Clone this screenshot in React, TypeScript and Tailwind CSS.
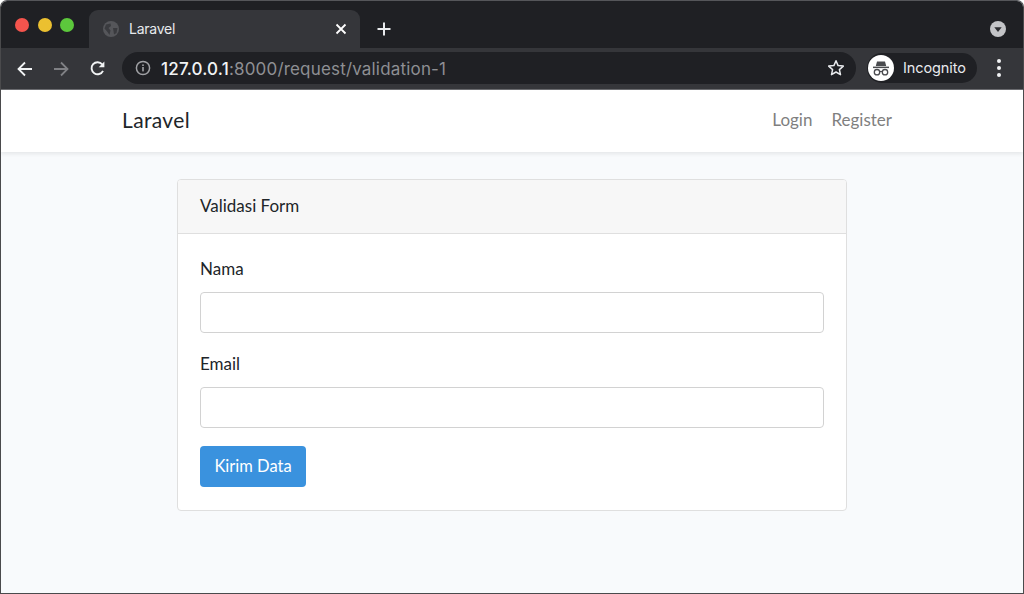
import React from "react";

function Globe() {
  return (
    <svg width="16" height="16" viewBox="0 0 16 16">
      <circle cx="8" cy="8" r="8" fill="#55565a" />
      <path d="M3 3.5 L7.5 2.5 L8 5 L5.5 7 L7.5 9.5 L6.5 14 L4.5 11 L1.5 7.5Z M10 7 L14.5 7 L13.5 12 L11 13.5 L10.5 10Z" fill="#3a3b3f" />
    </svg>
  );
}

function Incognito() {
  return (
    <svg width="26" height="26" viewBox="0 0 26 26">
      <circle cx="13" cy="13" r="13" fill="#ffffff" />
      <path d="M9 6.5 L17 6.5 L18.2 11 L7.8 11Z" fill="#4a4b4f" />
      <rect x="5" y="11.6" width="16" height="1.5" fill="#4a4b4f" />
      <circle cx="9" cy="17.2" r="2.7" fill="none" stroke="#4a4b4f" strokeWidth="1.3" />
      <circle cx="17" cy="17.2" r="2.7" fill="none" stroke="#4a4b4f" strokeWidth="1.3" />
      <path d="M11.7 16.8 Q13 16 14.3 16.8" fill="none" stroke="#4a4b4f" strokeWidth="1.2" />
    </svg>
  );
}

export default function App() {
  return (
    <div className="w-[1024px] h-[594px] bg-white overflow-hidden font-['Lato','Noto_Sans',sans-serif]">
      <div className="w-full h-full flex flex-col overflow-hidden rounded-t-[7px] border border-[#4a4a4c] border-t-[#55565a]">
        {/* tab strip */}
        <div className="h-[47px] shrink-0 bg-[#1f2024] flex items-end">
          <div className="w-[88px] h-[47px] flex items-start gap-[8.5px] pl-[14px] pt-[17px]">
            <span className="w-[14px] h-[14px] rounded-full bg-[#f5544d]" />
            <span className="w-[14px] h-[14px] rounded-full bg-[#ebc030]" />
            <span className="w-[14px] h-[14px] rounded-full bg-[#5cc83c]" />
          </div>
          <div className="w-[271px] h-[38px] bg-[#35363a] rounded-t-[9px] flex items-center pl-[14px] pr-[13px]">
            <Globe />
            <span className="ml-[10px] -mt-[2px] text-[14px] text-[#e8eaed] font-['Inter',sans-serif] tracking-[-0.25px]">Laravel</span>
            <svg className="ml-auto" width="12" height="12" viewBox="0 0 12 12">
              <path d="M1.5 1.5 L10.5 10.5 M10.5 1.5 L1.5 10.5" stroke="#ffffff" strokeWidth="1.8" />
            </svg>
          </div>
          <div className="ml-[17px] h-[38px] flex items-center">
            <svg width="14" height="14" viewBox="0 0 14 14">
              <path d="M7 0.5 V13.5 M0.5 7 H13.5" stroke="#e8eaed" strokeWidth="2" />
            </svg>
          </div>
          <div className="ml-auto mr-[17px] h-[38px] flex items-center">
            <svg width="16" height="16" viewBox="0 0 16 16">
              <circle cx="8" cy="8" r="8" fill="#c3c4c7" />
              <path d="M4.3 6.2 H11.7 L8 11Z" fill="#2a2b2f" />
            </svg>
          </div>
        </div>
        {/* toolbar */}
        <div className="h-[42px] shrink-0 bg-[#35363a] flex items-center border-b border-[#6b6c70]">
          <div className="w-[121px] flex items-center pl-[16px]">
            <svg width="16" height="16" viewBox="0 0 16 16">
              <path d="M15 8 H1.5 M8 1.5 L1.5 8 L8 14.5" fill="none" stroke="#f1f3f4" strokeWidth="1.8" />
            </svg>
            <svg className="ml-[20px]" width="16" height="16" viewBox="0 0 16 16">
              <path d="M1 8 H14.5 M8 1.5 L14.5 8 L8 14.5" fill="none" stroke="#7f8084" strokeWidth="1.8" />
            </svg>
            <svg className="ml-[20px]" width="17" height="17" viewBox="0 0 17 17">
              <path d="M14 10.8 A6 6 0 1 1 13.2 4.4" fill="none" stroke="#f1f3f4" strokeWidth="1.9" />
              <path d="M15.4 1.5 V7.2 H9.7Z" fill="#f1f3f4" />
            </svg>
          </div>
          <div className="w-[734px] h-[32px] -mt-[1px] bg-[#1f2024] rounded-full flex items-center pl-[13px] pr-[11px]">
            <svg width="16" height="16" viewBox="0 0 16 16">
              <circle cx="8" cy="8" r="6.6" fill="none" stroke="#a0a1a5" strokeWidth="1.5" />
              <rect x="7.2" y="7" width="1.6" height="4.4" fill="#a0a1a5" />
              <rect x="7.2" y="4.4" width="1.6" height="1.6" fill="#a0a1a5" />
            </svg>
            <span className="ml-[10px] mt-[2px] text-[17px] leading-[24px] font-['Inter',sans-serif] tracking-[0.18px] text-[#8e8f93] whitespace-nowrap">
              <span className="text-[#f1f3f4] font-medium">127.0.0.1</span>:8000/request/validation-1
            </span>
            <svg className="ml-auto" width="18" height="18" viewBox="0 0 18 18">
              <path d="M9 1.8 L11.1 6.6 L16.3 7.1 L12.4 10.6 L13.5 15.7 L9 13 L4.5 15.7 L5.6 10.6 L1.7 7.1 L6.9 6.6Z" fill="none" stroke="#e8eaed" strokeWidth="1.5" strokeLinejoin="round" />
            </svg>
          </div>
          <div className="ml-[11px] w-[110px] h-[30px] -mt-[1px] bg-[#1f2024] rounded-full flex items-center pl-[1px]">
            <Incognito />
            <span className="ml-[9px] text-[14.5px] font-['Inter',sans-serif] text-[#e8eaed] tracking-[-0.1px]">Incognito</span>
          </div>
          <div className="ml-auto mr-[22px] flex flex-col gap-[3px] -mt-[1px]">
            <span className="w-[4px] h-[4px] rounded-full bg-[#f1f3f4]" />
            <span className="w-[4px] h-[4px] rounded-full bg-[#f1f3f4]" />
            <span className="w-[4px] h-[4px] rounded-full bg-[#f1f3f4]" />
          </div>
        </div>
        {/* page */}
        <div className="flex-1 bg-[#f8fafc] flex flex-col">
          <nav className="h-[62px] shrink-0 bg-white shadow-[0_2px_4px_rgba(0,0,0,0.08)] flex items-center pl-[121px] pr-[131px] justify-between">
            <span className="text-[21px] tracking-[0.35px] -mt-[2px] text-[#212529]">Laravel</span>
            <div className="flex gap-[19px] text-[17px] text-[#7f7f7f] -mt-[3px]">
              <span>Login</span>
              <span>Register</span>
            </div>
          </nav>
          <div className="ml-[176px] mt-[27px] w-[670px] h-[332px] bg-white border border-[#dfdfdf] rounded-[4px] flex flex-col overflow-hidden">
            <div className="h-[54px] shrink-0 bg-[#f7f7f7] border-b border-[#dfdfdf] flex items-center px-[22px] pb-[2px] text-[17px] text-[#212529]">
              Validasi Form
            </div>
            <div className="px-[22px] flex flex-col">
              <label className="mt-[24px] text-[17px] leading-[22px] text-[#212529]">Nama</label>
              <div className="mt-[12px] h-[41px] bg-white border border-[#d2d2d2] rounded-[4px]" />
              <label className="mt-[20px] text-[17px] leading-[22px] text-[#212529]">Email</label>
              <div className="mt-[12px] h-[41px] bg-white border border-[#d2d2d2] rounded-[4px]" />
              <button className="mt-[18px] w-[106px] h-[41px] bg-[#3a92de] rounded-[4px] text-white text-[16.5px]">Kirim Data</button>
            </div>
          </div>
        </div>
      </div>
    </div>
  );
}
